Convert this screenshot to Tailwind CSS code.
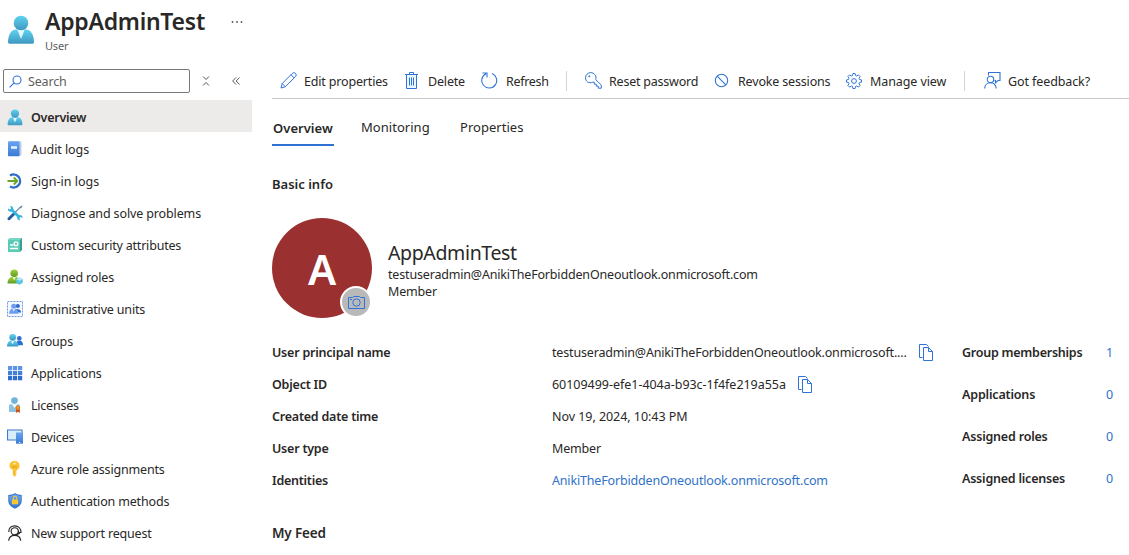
<!DOCTYPE html>
<html lang="en">
<head>
<meta charset="utf-8">
<title>AppAdminTest - User</title>
<script src="https://cdn.jsdelivr.net/npm/@tailwindcss/browser@4"></script>
</head>
<body class="bg-white">
<svg class="absolute w-0 h-0" aria-hidden="true">
  <defs>
    <linearGradient id="cy" x1="0" y1="0" x2="0" y2="1"><stop offset="0" stop-color="#5fd3f1"/><stop offset="1" stop-color="#3f97bf"/></linearGradient>
    <linearGradient id="bl" x1="0" y1="0" x2="0" y2="1"><stop offset="0" stop-color="#69a4f0"/><stop offset="1" stop-color="#3a7ad4"/></linearGradient>
    <linearGradient id="gr" x1="0" y1="0" x2="0" y2="1"><stop offset="0" stop-color="#a0d23c"/><stop offset="1" stop-color="#5f9a25"/></linearGradient>
    <linearGradient id="ye" x1="0" y1="0" x2="0" y2="1"><stop offset="0" stop-color="#fdbf2d"/><stop offset="1" stop-color="#f5cf45"/></linearGradient>
    <symbol id="user" viewBox="0 0 28 30"><path d="M1 27C1 19 5 14.500 9 14.500h10C23 14.500 27 19 27 27c0 1-.8 1.800-1.800 1.800H2.800C1.800 28.800 1 28 1 27z" fill="url(#cy)"/><path d="M10.500 15h7L14 24z" fill="#e4f7fd"/><circle cx="14" cy="8" r="7.300" fill="url(#cy)"/></symbol>
    <symbol id="copy" viewBox="0 0 16 17"><path d="M4.500 13.500h-3V.500h7l2 2M5.500 3.500h5l4 4v9h-9zM10.500 3.500v4h4" fill="none" stroke="#2f73d8"/></symbol>
  </defs>
</svg>
<div class="w-[1129px] h-[555px] overflow-hidden font-['Noto_Sans','Open_Sans',sans-serif] text-[12.5px] leading-4 tracking-[-0.17px] text-[#292827] whitespace-nowrap">
  <header class="flex h-[68px]">
    <svg class="w-7 h-[30px] ml-[7px] mt-[15px]"><use href="#user"/></svg>
    <div class="ml-[10px] mt-[6px] w-[186px]">
      <h1 class="text-[23px] leading-[30px] font-semibold tracking-[-0.25px]">AppAdminTest</h1>
      <p class="text-[11px] leading-4 text-[#605e5c] mt-[2px]">User</p>
    </div>
    <svg class="w-3 h-2 mt-[18px]" viewBox="0 0 12 8" fill="#555"><circle cx="1.500" cy="4" r=".9"/><circle cx="6" cy="4" r=".9"/><circle cx="10.500" cy="4" r=".9"/></svg>
  </header>
  <div class="flex">
    <aside class="w-[252px]">
      <div class="flex items-center h-[26px] pl-[3px]">
        <div class="flex items-center w-[187px] h-6 border border-[#7a7977] rounded-[2px] pl-[5px] text-[#605e5c]">
          <svg class="w-[13px] h-[13px] mr-[6px]" viewBox="0 0 13 13" fill="none" stroke="#2f73d8" stroke-width="1.100"><circle cx="8" cy="5" r="4"/><path d="M5.100 7.900L.6 12.400"/></svg>
          <span class="pt-[2px]">Search</span>
        </div>
        <svg class="w-2 h-[10px] ml-3" viewBox="0 0 8 10" fill="none" stroke="#555"><path d="M1 .5l3 3 3-3M1 9.500l3-3 3 3"/></svg>
        <svg class="w-2 h-2 ml-[22px]" viewBox="0 0 8 8" fill="none" stroke="#555"><path d="M4 .5L.7 4 4 7.500M7.500.5L4.200 4l3.300 3.500"/></svg>
      </div>
      <nav class="mt-[6px]">
        <a class="flex items-center h-8 pt-[2px] bg-[#edebe9] pl-[7px] font-semibold"><svg class="w-4 h-[17px] mr-2"><use href="#user"/></svg><span class="pt-[2px] tracking-[-0.25px]">Overview</span></a>
        <a class="flex items-center h-8 pt-[2px] pl-[7px]"><svg class="w-4 h-4 mr-2" viewBox="0 0 16 16"><path d="M2.500.5h11c.8 0 1 .4 1 1v12c0 .7-.4 1-1 1h-11z" fill="#c2cfe2"/><path d="M1 1.500C1 .7 1.400.300 2.200.300H12.500v15H2.200C1.400 15.300 1 14.900 1 14.200z" fill="url(#bl)"/><path d="M4 5.200h6v2.600H4z" fill="#e3f1ff"/></svg><span class="pt-[2px] tracking-[-0.08px]">Audit logs</span></a>
        <a class="flex items-center h-8 pt-[2px] pl-[7px]"><svg class="w-4 h-4 mr-2" viewBox="0 0 16 16" fill="none"><path d="M3 2.600A6.500 6.500 0 1 1 3 13.400" stroke="#2b6ccc" stroke-width="2.300"/><path d="M.5 8h9M6.800 4.500L10.300 8l-3.500 3.500" stroke="#6aa62b" stroke-width="1.900"/></svg><span class="pt-[2px] tracking-[0px]">Sign-in logs</span></a>
        <a class="flex items-center h-8 pt-[2px] pl-[7px]"><svg class="w-4 h-4 mr-2" viewBox="0 0 16 16" fill="none"><path d="M2 13.700L6.500 9.300" stroke="#235f9e" stroke-width="3" stroke-linecap="round"/><path d="M7 8.500L13.500 2" stroke="#7998ae" stroke-width="1.200"/><path d="M12.600 2.200L15 .6l.5.500L14 3.500z" fill="#5a7f9d"/><path d="M4 4l8.500 8.500" stroke="#35b5dd" stroke-width="2.600"/><path d="M3.200 1.100l1 2.300-1 1-2.200-1C.7 5.500 2 7 4.200 6.700 6 6.500 6.700 5 6.200 3.200 5.800 1.800 4.700.8 3.200 1.100zM13.300 15.300l-1-2.100 1-1.100 2.200 1c.2-2-1.200-3.400-3.200-3-1.800.4-2.500 1.900-2 3.400.3 1.300 1.500 2 3 1.800z" fill="#35b5dd"/></svg><span class="pt-[2px] tracking-[-0.13px]">Diagnose and solve problems</span></a>
        <a class="flex items-center h-8 pt-[2px] pl-[7px]"><svg class="w-4 h-4 mr-2" viewBox="0 0 16 16"><path d="M3 1h12v12l-2 2V3H1z" fill="#3d9d8e"/><path d="M1 3h12v12H1z" fill="#5bcbb6"/><path d="M1 3l2-2h12l-2 2z" fill="#78d6c5"/><path d="M3 8h3.500M3 11.500h8" stroke="#fff" stroke-width="1.300"/><circle cx="9" cy="6.700" r="1.900" fill="none" stroke="#fff" stroke-width="1.300"/></svg><span class="pt-[2px] tracking-[-0.2px]">Custom security attributes</span></a>
        <a class="flex items-center h-8 pt-[2px] pl-[7px]"><svg class="w-4 h-4 mr-2" viewBox="0 0 16 16"><path d="M.5 14.500C.5 10.500 2.800 8 5 8h4c2.200 0 4.500 2.500 4.500 6.500z" fill="url(#gr)"/><path d="M5.300 7.500h3.800l-1.900 4.300z" fill="#e5f6c4"/><circle cx="7.200" cy="4.200" r="3.800" fill="url(#gr)"/><path d="M12.500 8.500l3.300 1.700v3.600l-3.300 2-3.300-2v-3.600z" fill="#5dc6e4"/><path d="M9.200 10.200l3.300 1.600 3.300-1.600-3.300-1.700z" fill="#b1e8f4"/></svg><span class="pt-[2px]">Assigned roles</span></a>
        <a class="flex items-center h-8 pt-[2px] pl-[7px]"><svg class="w-4 h-4 mr-2" viewBox="0 0 16 16"><path d="M.5.500h15v15H.5z" fill="#f4f8ff" stroke="#6f9be2" stroke-dasharray="2 1"/><circle cx="10.800" cy="5" r="2.100" fill="#2d68ca"/><path d="M8.500 11.500V8c4 0 5.500 1 5.500 3.500z" fill="#2d68ca"/><circle cx="6.700" cy="5.300" r="2.500" fill="#6e9cf0"/><path d="M2 12.700c0-3 1.700-5 3.500-5H8c2 0 3.500 2 3.500 5z" fill="#6e9cf0"/><path d="M5.400 7.700h2.700l-1.300 3z" fill="#e8f1ff"/></svg><span class="pt-[2px]">Administrative units</span></a>
        <a class="flex items-center h-8 pt-[2px] pl-[7px]"><svg class="w-4 h-4 mr-2" viewBox="0 0 16 16"><circle cx="12.300" cy="5.400" r="2.300" fill="#2e70d0"/><path d="M9 12.300c0-3 1-4.500 2.500-4.500h1.700c1.600 0 2.800 1.700 2.800 4.500z" fill="#2e70d0"/><path d="M0 13.500C0 10 1.800 7.700 3.800 7.700h3.700c2.200 0 3.900 2.300 3.900 5.800z" fill="url(#cy)"/><path d="M3.800 7.500h3.600l-1.800 4z" fill="#e4f7fd"/><circle cx="5.700" cy="4.300" r="3.400" fill="url(#cy)"/></svg><span class="pt-[2px]">Groups</span></a>
        <a class="flex items-center h-8 pt-[2px] pl-[7px]"><svg class="w-4 h-4 mr-2" viewBox="0 0 16 16"><path fill="#5d94e6" d="M1 1h4.200v4.200H1zM6 1h4.200v4.200H6zM11 1h4.200v4.200H11z"/><path fill="#447fd8" d="M1 6h4.200v4.200H1zM6 6h4.200v4.200H6zM11 6h4.200v4.200H11z"/><path fill="#2e6dce" d="M1 11h4.200v4.200H1zM6 11h4.200v4.200H6zM11 11h4.200v4.200H11z"/></svg><span class="pt-[2px] tracking-[-0.1px]">Applications</span></a>
        <a class="flex items-center h-8 pt-[2px] pl-[7px]"><svg class="w-4 h-4 mr-2" viewBox="0 0 16 16"><path d="M2 15V9c0-1 .6-1.700 1.600-1.700h7.800c1 0 1.600.7 1.600 1.700v6z" fill="#8bc3df"/><path d="M4.800 7.200h5.600L7.600 11z" fill="#fff"/><circle cx="7.500" cy="3.600" r="3.300" fill="#6db4d8"/><path d="M9 11h3.700v5l-1.900-1.300L9 16z" fill="#c94d17"/><circle cx="10.800" cy="10.700" r="2.300" fill="#e57a1d"/><circle cx="10.800" cy="10.700" r="1" fill="#f8a62e"/></svg><span class="pt-[2px] tracking-[-0.22px]">Licenses</span></a>
        <a class="flex items-center h-8 pt-[2px] pl-[7px]"><svg class="w-4 h-4 mr-2" viewBox="0 0 16 16"><path d="M.5 1h14.500v10H.5z" fill="#d9edfa" stroke="#3c79c9" stroke-width="1.100"/><path d="M9 3.500h7v11.200H9z" fill="url(#bl)"/><path d="M12 13h1.200v1H12z" fill="#fff"/></svg><span class="pt-[2px]">Devices</span></a>
        <a class="flex items-center h-8 pt-[2px] pl-[7px]"><svg class="w-4 h-4 mr-2" viewBox="0 0 16 16"><path d="M7.500 0C10.500 0 12.600 2 12.600 4.700c0 2-1 3.500-2.800 4.300v1l-1 .8 1 1-1 1 .8 1L7.700 16l-1.900-2V9C3.900 8.200 2.400 6.700 2.400 4.700 2.400 2 4.500 0 7.500 0z" fill="url(#ye)"/><circle cx="7.500" cy="2.500" r="1.100" fill="#fff4cf"/><path d="M4.800 5.300h5.400M4.800 6.700h5.400" stroke="#e2a01c" stroke-width=".8"/><path d="M7 9.500v4.500" stroke="#f09c1d" stroke-width=".8"/></svg><span class="pt-[2px]">Azure role assignments</span></a>
        <a class="flex items-center h-8 pt-[2px] pl-[7px]"><svg class="w-4 h-4 mr-2" viewBox="0 0 16 16"><path d="M8 0c2 1.600 4.200 1.900 6.700 2v5.500c0 4-3 6.600-6.700 8.300C4.300 14.100 1.300 11.500 1.300 7.500V2C3.800 1.900 6 1.600 8 0z" fill="#2c6cc4"/><path d="M8 1c1.800 1.300 3.800 1.700 6 1.800v4.700c0 3.500-2.700 5.800-6 7.400-3.300-1.600-6-3.900-6-7.400V2.800C4.200 2.700 6.200 2.300 8 1z" fill="url(#bl)"/><path d="M4.900 6.500h6.200v4.800H4.900z" fill="#fbc72d"/><path d="M6.300 6.500V5a1.700 1.700 0 0 1 3.400 0v1.500" fill="none" stroke="#fbc72d" stroke-width="1.100"/></svg><span class="pt-[2px]">Authentication methods</span></a>
        <a class="flex items-center h-8 pt-[2px] pl-[7px]"><svg class="w-4 h-4 mr-2" viewBox="0 0 16 16" fill="none" stroke="#292827" stroke-width="1.150"><path d="M1.800 7C1.500 3 4.200.8 7.700.8S14 3.300 14 7.500h-2.500V5.800M12.700 7.800C12 9.500 10.500 9.600 8 9.600"/><circle cx="7.700" cy="6.300" r="3.600"/><path d="M1.700 15.800c.3-3.300 2.800-5.400 6-5.400s5.700 2.100 6 5.400"/></svg><span class="pt-[2px]">New support request</span></a>
      </nav>
    </aside>
    <main class="ml-5 w-[857px]">
      <div class="flex items-center h-[31px] pb-[5px] border-b border-[#c8c6c4] pl-2">
        <div class="flex items-center w-[124px]"><svg class="w-[17px] h-[17px] mr-[7px]" viewBox="0 0 17 17" fill="none" stroke="#2f73d8"><path d="M1 16l1.200-4.500L12.300 1.400a2 2 0 0 1 3.200 3.200L5.200 14.800zM11 2.800l3.200 3.200M2.200 11.500l3 3.200"/></svg><span class="pt-[2px]">Edit properties</span></div>
        <div class="flex items-center w-[77px]"><svg class="w-[15px] h-[17px] mr-[9px]" viewBox="0 0 15 17" fill="none" stroke="#2f73d8"><path d="M2.500 3v13.500h10V3" fill="#eaf7fe"/><path d="M1 2.500h13M5.500 2.500v-2h4v2M5.500 5.500v8M7.500 5.500v8M9.500 5.500v8"/></svg><span class="pt-[2px]">Delete</span></div>
        <div class="flex items-center w-[85px]"><svg class="w-[17px] h-[17px] mr-2" viewBox="0 0 17 17" fill="none" stroke="#2f73d8" stroke-width="1.100"><path d="M11 1.500A7.500 7.500 0 1 1 5 1.700M1.500 1h4.500v4.500"/></svg><span class="pt-[2px] tracking-[-0.3px]">Refresh</span></div>
        <div class="w-px h-5 bg-[#d6d4d2] mr-[18px]"></div>
        <div class="flex items-center w-[129px]"><svg class="w-[17px] h-[17px] mr-[7px]" viewBox="0 0 17 17" fill="none" stroke="#2f73d8"><path d="M10.700 7.600l5.600 5.400v3.200h-3v-2h-2v-2h-2v-2L7.800 10.200C4 12 .5 9.200.5 5.800.5 3 2.800.6 5.700.6c3.500 0 6.300 3.500 5 7z"/><circle cx="4.300" cy="4.300" r=".6"/></svg><span class="pt-[2px] tracking-[-0.22px]">Reset password</span></div>
        <div class="flex items-center w-[132px]"><svg class="w-[15px] h-[15px] mr-[9px]" viewBox="0 0 15 15" fill="none" stroke="#2f73d8" stroke-width="1.100"><circle cx="7.500" cy="7.500" r="6.200"/><path d="M3.200 3.200l8.600 8.600"/></svg><span class="pt-[2px]">Revoke sessions</span></div>
        <div class="flex items-center w-[118px]"><svg class="w-4 h-4 mr-2" viewBox="0 0 16 16" fill="none" stroke="#2f73d8" stroke-linejoin="round"><path d="M6.900.5h2.200l.4 2 1.200.5 1.700-1.100 1.700 1.700L13 5.300l.5 1.200 2 .4v2.200l-2 .4-.5 1.200 1.100 1.700-1.700 1.700-1.700-1.100-1.200.5-.4 2H6.900l-.4-2-1.200-.5-1.700 1.100-1.700-1.700L3 10.700l-.5-1.200-2-.4V6.900l2-.4L3 5.300 1.900 3.600l1.700-1.700L5.300 3l1.200-.5z"/><circle cx="8" cy="8" r="2.400"/></svg><span class="pt-[2px] tracking-[-0.1px]">Manage view</span></div>
        <div class="w-px h-5 bg-[#d6d4d2] mr-[19px]"></div>
        <div class="flex items-center"><svg class="w-[17px] h-[17px] mr-[7px]" viewBox="0 0 17 17" fill="none" stroke="#2f73d8" stroke-width="1.100"><path d="M4.500 3.500v-3h11.500v8h-2l-2.500 2.300V8.500h-1"/><circle cx="6.500" cy="7.500" r="3.200"/><path d="M.7 16.500c0-3.500 2.600-5.700 5.800-5.700s5.300 2 5.800 5.700"/></svg><span class="pt-[2px] tracking-[-0.1px]">Got feedback?</span></div>
      </div>
      <div class="flex h-[47px] text-[13px] leading-[18px] tracking-[0.03px]">
        <div class="h-full border-b-2 border-[#2f72d0] w-[62px] mr-[27px] pt-5 pl-px font-semibold">Overview</div>
        <div class="w-[99px] pt-[19px]">Monitoring</div>
        <div class="pt-[19px]">Properties</div>
      </div>
      <h2 class="mt-[30px] text-[13px] font-semibold tracking-[0px]">Basic info</h2>
      <section class="flex mt-[26px] h-[100px]">
        <div class="relative flex items-center justify-center w-[100px] h-[100px] rounded-full bg-[#9b3030] text-white text-[42px] leading-none font-semibold pt-[2px]"><span>A</span>
          <div class="absolute left-[68px] top-[68px] w-8 h-8 rounded-full bg-[#b9b9b9] border-2 border-white flex items-center justify-center"><svg class="w-[17px] h-[14px]" viewBox="0 0 17 14" fill="none" stroke="#2f73d8"><path d="M.5 2.500h4l1-1h6l1 1h4v11H.5z"/><circle cx="8.500" cy="7.500" r="3.700"/><path d="M2 4.500h2"/></svg></div>
        </div>
        <div class="ml-4 mt-[22px]">
          <div class="text-[19.500px] leading-[26px] tracking-[-0.36px]">AppAdminTest</div>
          <div class="leading-[17px]">testuseradmin@AnikiTheForbiddenOneoutlook.onmicrosoft.com</div>
          <div class="leading-[17px]">Member</div>
        </div>
      </section>
      <section class="flex mt-[19px]">
        <dl class="w-[690px] grid grid-cols-[280px_1fr] auto-rows-[32px] items-center">
          <dt class="font-semibold tracking-[-0.22px]">User principal name</dt><dd class="flex items-center"><span class="w-[366px]">testuseradmin@AnikiTheForbiddenOneoutlook.onmicrosoft....</span><svg class="w-4 h-[17px] mb-[2px]"><use href="#copy"/></svg></dd>
          <dt class="font-semibold tracking-[-0.22px]">Object ID</dt><dd class="flex items-center"><span class="w-[245px] tracking-[-0.03px]">60109499-efe1-404a-b93c-1f4fe219a55a</span><svg class="w-4 h-[17px] mb-[2px]"><use href="#copy"/></svg></dd>
          <dt class="font-semibold tracking-[-0.22px]">Created date time</dt><dd class="tracking-[-0.05px]">Nov 19, 2024, 10:43 PM</dd>
          <dt class="font-semibold tracking-[-0.22px]">User type</dt><dd>Member</dd>
          <dt class="font-semibold tracking-[-0.25px]">Identities</dt><dd class="text-[#2f72c8]">AnikiTheForbiddenOneoutlook.onmicrosoft.com</dd>
        </dl>
        <dl class="w-[151px] -mt-[5px] grid grid-cols-[1fr_auto] auto-rows-[42px] items-center">
          <dt class="font-semibold tracking-[-0.25px]">Group memberships</dt><dd class="text-[#2f72c8]">1</dd>
          <dt class="font-semibold tracking-[-0.17px]">Applications</dt><dd class="text-[#2f72c8]">0</dd>
          <dt class="font-semibold tracking-[-0.2px]">Assigned roles</dt><dd class="text-[#2f72c8]">0</dd>
          <dt class="font-semibold tracking-[-0.22px]">Assigned licenses</dt><dd class="text-[#2f72c8]">0</dd>
        </dl>
      </section>
      <h2 class="mt-[24px] text-[13.500px] leading-[18px] font-semibold">My Feed</h2>
    </main>
  </div>
</div>
</body>
</html>
